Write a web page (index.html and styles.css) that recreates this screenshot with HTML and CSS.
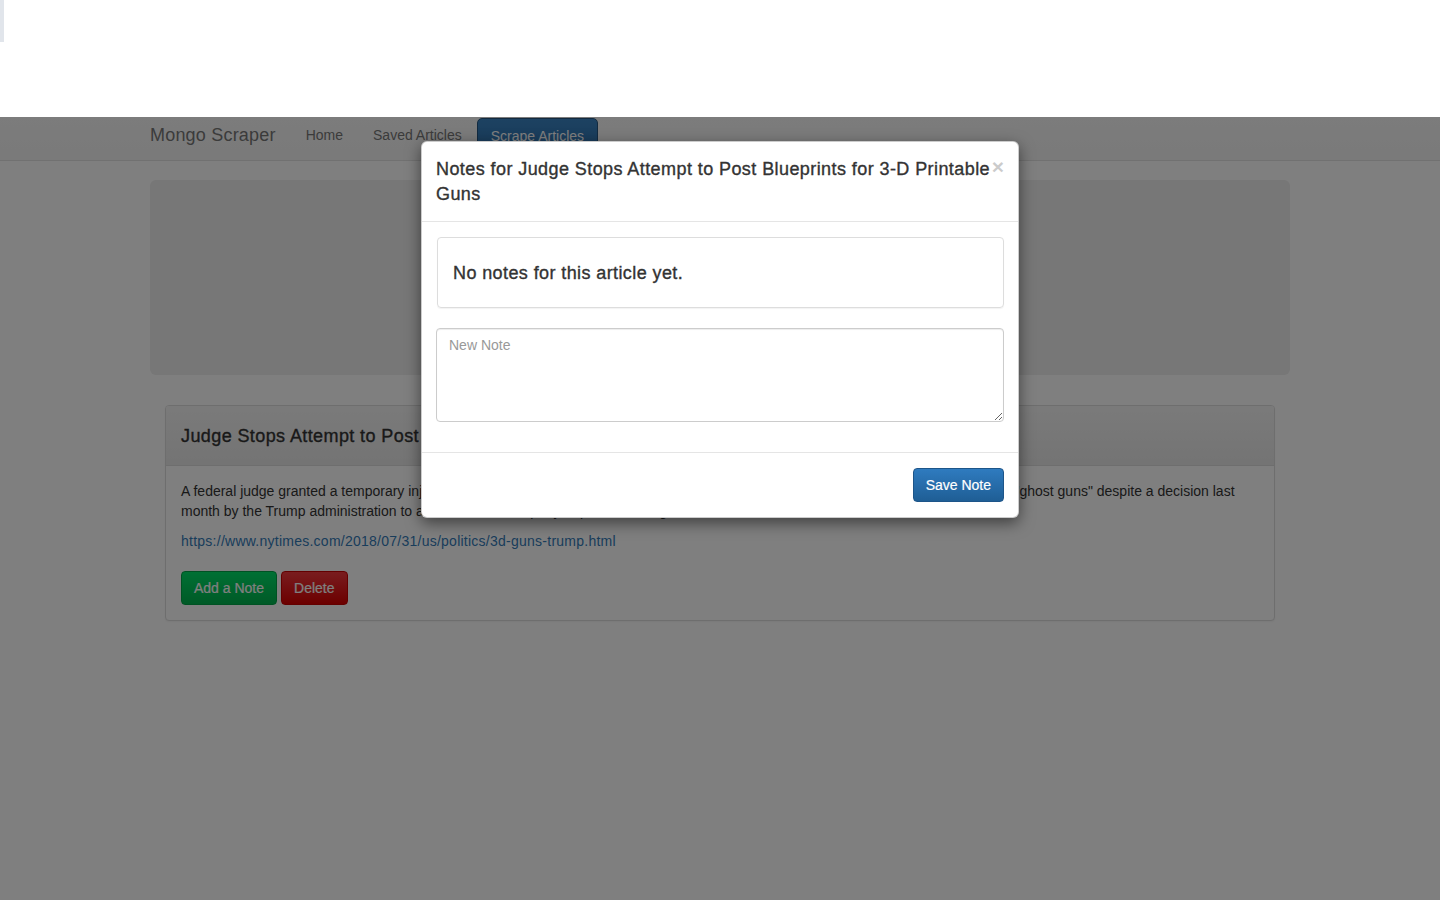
FILE: index.html
```html
<!DOCTYPE html>
<html lang="en">
<head>
<meta charset="utf-8">
<title>Mongo Scraper</title>
<link rel="stylesheet" href="styles.css">
</head>
<body>
<div class="topstrip"><div class="topstrip-mark"></div></div>
<div class="stage">
  <nav class="navbar">
    <div class="container nav-inner">
      <span class="brand">Mongo Scraper</span>
      <a class="nav-link" href="#">Home</a>
      <a class="nav-link" href="#">Saved Articles</a>
      <a class="nav-btn" href="#">Scrape Articles</a>
    </div>
  </nav>
  <div class="container">
    <div class="jumbotron"></div>
    <div class="articles">
      <div class="panel">
        <div class="panel-heading">
          <h3 class="panel-title">Judge Stops Attempt to Post Blueprints for 3-D Printable Guns</h3>
        </div>
        <div class="panel-body">
          <p class="summary">A federal judge granted a temporary injunction on Tuesday to block online publication of blueprints for 3-D printable firearms, so-called "ghost guns" despite a decision last month by the Trump administration to allow a Texas company to post the designs on the internet.</p>
          <p class="link-line"><a href="#">https://www.nytimes.com/2018/07/31/us/politics/3d-guns-trump.html</a></p>
          <div class="actions">
            <button class="btn btn-success">Add a Note</button>
            <button class="btn btn-danger">Delete</button>
          </div>
        </div>
      </div>
    </div>
  </div>
  <div class="backdrop"></div>
  <div class="modal">
    <div class="modal-header">
      <button class="close">×</button>
      <h4 class="modal-title">Notes for Judge Stops Attempt to Post Blueprints for 3-D Printable Guns</h4>
    </div>
    <div class="modal-body">
      <div class="notes-box"><h4 class="no-notes">No notes for this article yet.</h4></div>
      <textarea class="note-input" placeholder="New Note"></textarea>
    </div>
    <div class="modal-footer">
      <button class="btn btn-primary">Save Note</button>
    </div>
  </div>
</div>
</body>
</html>
```
FILE: styles.css
```css
* { box-sizing: border-box; }
html, body { margin: 0; padding: 0; }
body {
  font-family: "Liberation Sans", Arial, Helvetica, sans-serif;
  font-size: 14px;
  line-height: 20px;
  color: #333;
  background: #fff;
  width: 1440px;
  height: 900px;
  overflow: hidden;
}
.topstrip { height: 117px; background: #fff; position: relative; }
.topstrip-mark { width: 4px; height: 42px; background: #e1e5eb; }
.stage { position: relative; height: 783px; overflow: hidden; background: #fff; }

.container { width: 1170px; margin: 0 auto; padding: 0 15px; }

.navbar {
  height: 44px;
  background: linear-gradient(#f8f8f8, #f4f4f4);
  border-bottom: 1px solid #e2e2e2;
  margin-bottom: 19px;
}
.nav-inner { display: flex; align-items: flex-start; height: 43px; }
.brand { font-size: 18px; line-height: 20px; color: #777; padding-top: 8px; margin-right: 15px; letter-spacing: 0.2px; }
.nav-link { font-size: 14px; line-height: 20px; color: #777; text-decoration: none; padding: 8px 15px 0; }
.nav-btn {
  margin-top: 1px;
  height: 36px;
  width: 121px;
  padding: 7px 0 0 13px;
  font-size: 14px;
  color: #fff;
  text-decoration: none;
  background: linear-gradient(#3a84c4, #2f72ad);
  border: 1px solid #245580;
  border-radius: 5px;
}

.medium { -webkit-text-stroke: 0.3px currentColor; }

.jumbotron { height: 195px; background: #eee; border-radius: 6px; margin-bottom: 30px; }
.articles { padding: 0 15px; }
.panel { border: 1px solid #ddd; border-radius: 4px; background: #fff; box-shadow: 0 1px 2px rgba(0,0,0,.05); }
.panel-heading {
  height: 60px;
  padding: 0 15px;
  display: flex;
  align-items: center;
  background: linear-gradient(#f5f5f5, #e8e8e8);
  border-bottom: 1px solid #ddd;
  border-radius: 3px 3px 0 0;
}
.panel-title {
  margin: 0;
  font-size: 18px;
  font-weight: 500;
  color: #333;
  line-height: 20px;
  letter-spacing: 0.4px;
  -webkit-text-stroke: 0.35px currentColor;
}
.panel-body { padding: 15px 15px 15px; }
.summary { margin: 0 0 10px; }
.link-line { margin: 0 0 20px; }
.link-line a { color: #337ab7; text-decoration: none; letter-spacing: 0.25px; }
.actions { display: flex; gap: 4px; }

.btn {
  font-family: inherit;
  font-size: 14px;
  line-height: 20px;
  padding: 6px 12px;
  height: 34px;
  border-radius: 4px;
  color: #fff;
  cursor: pointer;
  -webkit-text-stroke: 0.2px currentColor;
}
.btn-success { background: linear-gradient(#00e068, #00b44e); border: 1px solid #00a546; }
.btn-danger { background: linear-gradient(#f23a3e, #d80000); border: 1px solid #c80000; }
.btn-primary { background: linear-gradient(#2f7bbf, #1f5e95); border: 1px solid #1d5589; }

.backdrop { position: absolute; inset: 0; background: rgba(0,0,0,.5); }

.modal {
  position: absolute;
  top: 24px;
  left: 421px;
  width: 598px;
  background: #fff;
  border: 1px solid rgba(0,0,0,.2);
  border-radius: 6px;
  box-shadow: 0 5px 15px rgba(0,0,0,.5);
}
.modal-header { padding: 15px 14px 14px; border-bottom: 1px solid #e5e5e5; }
.modal-header::after { content: ""; display: block; clear: both; }
.close {
  float: right;
  margin-top: -1px;
  padding: 0;
  border: 0;
  background: none;
  font-family: inherit;
  font-size: 21px;
  font-weight: bold;
  line-height: 1;
  color: #000;
  opacity: .2;
}
.modal-title {
  margin: 0;
  font-size: 18px;
  line-height: 25px;
  font-weight: 500;
  color: #333;
  letter-spacing: 0.42px;
  -webkit-text-stroke: 0.35px currentColor;
}
.modal-body { padding: 15px 14px 30px; }
.notes-box { border: 1px solid #ddd; border-radius: 4px; padding: 15px 15px 14px; margin: 0 0 20px 1px; box-shadow: 0 1px 1px rgba(0,0,0,.05); }
.no-notes {
  margin: 10px 0;
  font-size: 18px;
  line-height: 20px;
  font-weight: 500;
  color: #333;
  letter-spacing: 0.4px;
  -webkit-text-stroke: 0.35px currentColor;
}
.note-input {
  display: block;
  width: 100%;
  height: 94px;
  padding: 6px 12px;
  font-family: inherit;
  font-size: 14px;
  line-height: 20px;
  color: #555;
  border: 1px solid #ccc;
  border-radius: 4px;
  box-shadow: inset 0 1px 1px rgba(0,0,0,.075);
  resize: vertical;
}
.note-input::placeholder { color: #999; }
.modal-footer { padding: 15px 14px; border-top: 1px solid #e5e5e5; display: flex; justify-content: flex-end; }
```
